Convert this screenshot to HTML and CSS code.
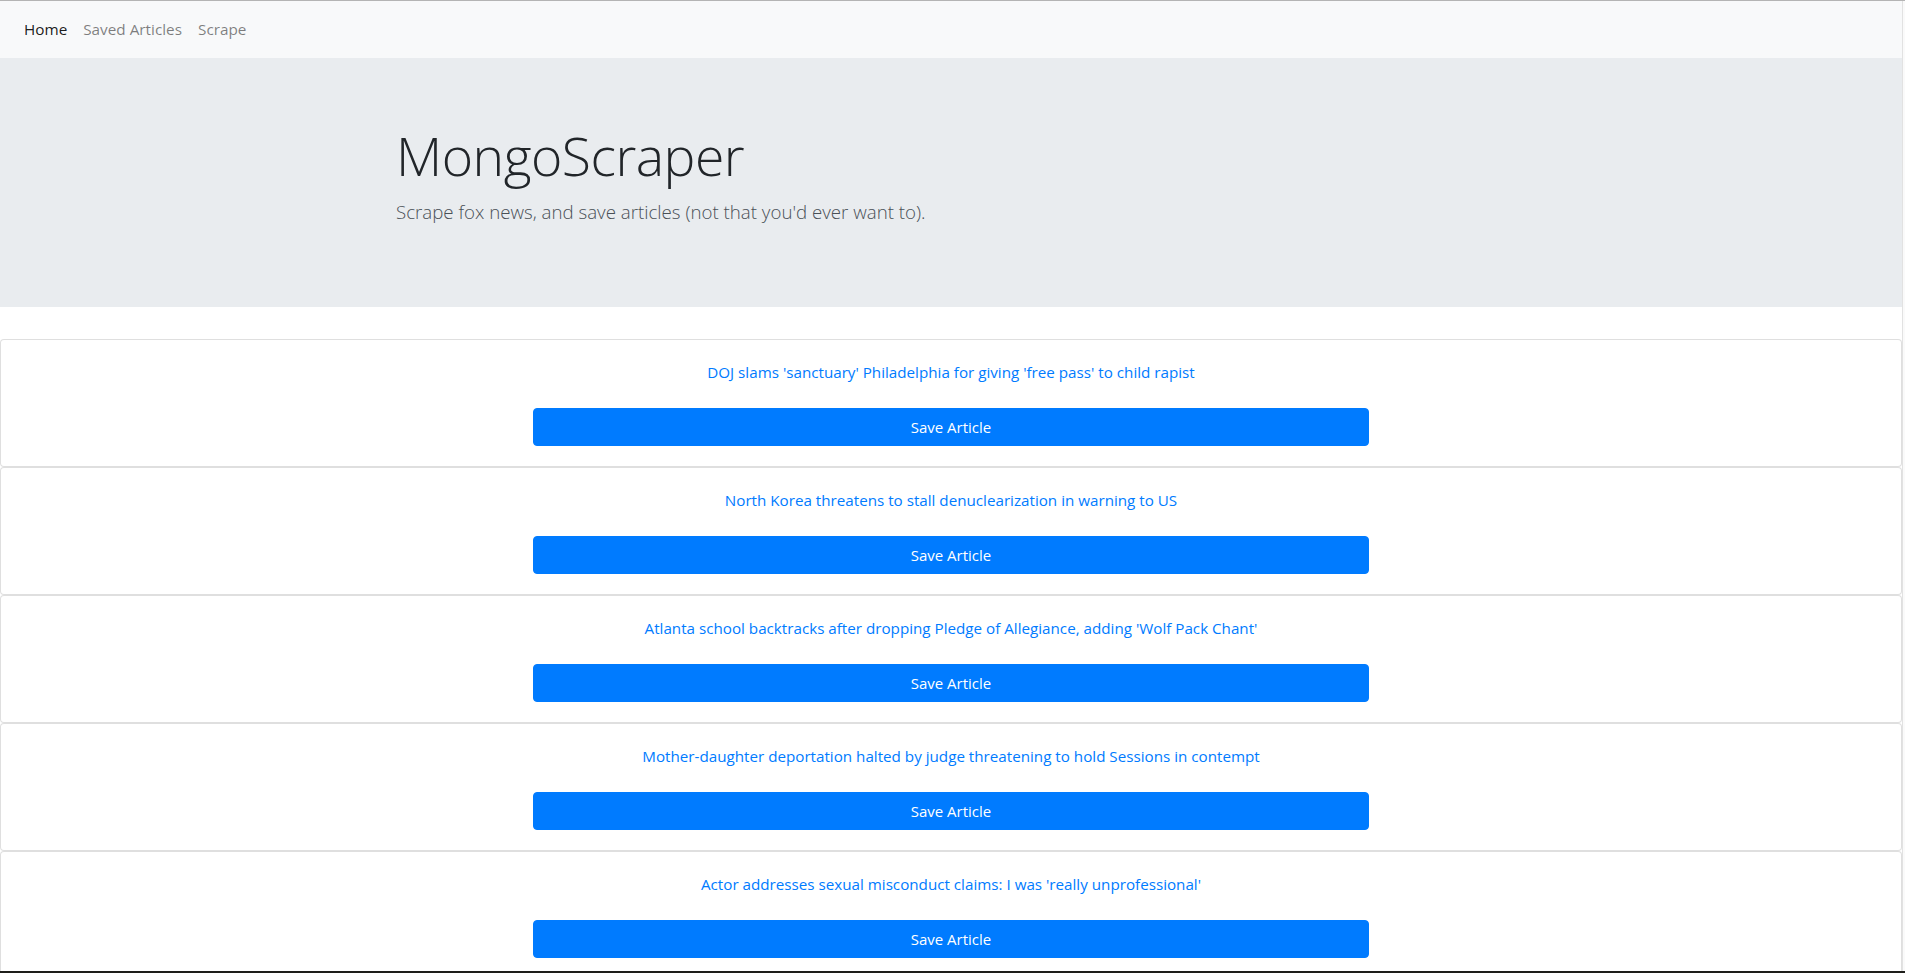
FILE: index.html
```html
<!DOCTYPE html>
<html lang="en">
<head>
<meta charset="utf-8">
<title>MongoScraper</title>
<link rel="stylesheet" href="styles.css">
</head>
<body>
<div class="page">
  <nav class="navbar">
    <a class="nav-link active" href="#">Home</a>
    <a class="nav-link" href="#">Saved Articles</a>
    <a class="nav-link" href="#">Scrape</a>
  </nav>
  <header class="jumbotron">
    <div class="container">
      <h1 class="display">MongoScraper</h1>
      <p class="lead">Scrape fox news, and save articles (not that you'd ever want to).</p>
    </div>
  </header>
  <main class="articles">
    <div class="card">
      <div class="card-body">
        <a class="article-link" href="#">DOJ slams 'sanctuary' Philadelphia for giving 'free pass' to child rapist</a>
        <button class="btn">Save Article</button>
      </div>
    </div>
    <div class="card">
      <div class="card-body">
        <a class="article-link" href="#">North Korea threatens to stall denuclearization in warning to US</a>
        <button class="btn">Save Article</button>
      </div>
    </div>
    <div class="card">
      <div class="card-body">
        <a class="article-link" href="#">Atlanta school backtracks after dropping Pledge of Allegiance, adding 'Wolf Pack Chant'</a>
        <button class="btn">Save Article</button>
      </div>
    </div>
    <div class="card">
      <div class="card-body">
        <a class="article-link" href="#">Mother-daughter deportation halted by judge threatening to hold Sessions in contempt</a>
        <button class="btn">Save Article</button>
      </div>
    </div>
    <div class="card">
      <div class="card-body">
        <a class="article-link" href="#">Actor addresses sexual misconduct claims: I was 'really unprofessional'</a>
        <button class="btn">Save Article</button>
      </div>
    </div>
  </main>
</div>
<div class="taskbar-edge"></div>
</body>
</html>
```

FILE: styles.css
```css
* { box-sizing: border-box; }

html {
  background: #fafafa;
}

body {
  margin: 0;
  border-top: 1px solid #b4b4b4;
  font-family: "Open Sans", "Noto Sans", sans-serif;
  font-size: 16px;
  line-height: 1.5;
  color: #212529;
}

.page {
  width: calc(100% - 2px);
  background: #fff;
  border-right: 1px solid #e2e2e2;
  min-height: 972px;
}

.navbar {
  display: flex;
  align-items: center;
  height: 57px;
  padding: 8px 16px;
  background: #f8f9fa;
}

.nav-link {
  padding: 8px;
  color: rgba(0, 0, 0, 0.5);
  text-decoration: none;
  font-size: 15.3px;
}

.nav-link.active {
  color: rgba(0, 0, 0, 0.9);
}

.jumbotron {
  background: #e9ecef;
  padding: 64px 0;
  margin-bottom: 32px;
}

.container {
  width: 1140px;
  margin: 0 auto;
  padding: 0 15px;
}

.display {
  margin: 0 0 8px;
  font-size: 53.5px;
  font-weight: 300;
  line-height: 67px;
  letter-spacing: -0.5px;
}

.lead {
  margin: 0 0 16px;
  font-size: 18.7px;
  font-weight: 300;
  line-height: 30px;
  color: #495057;
}

.card {
  border: 1px solid rgba(0, 0, 0, 0.125);
  border-radius: 4px;
  background: #fff;
}

.card-body {
  display: flex;
  flex-direction: column;
  align-items: center;
  padding: 20px;
  text-align: center;
}

.article-link {
  color: #007bff;
  text-decoration: none;
  font-size: 15.2px;
  line-height: 24px;
  margin-bottom: 24px;
}

.btn {
  width: 836px;
  height: 38px;
  border: 1px solid #007bff;
  border-radius: 4px;
  background: #007bff;
  color: #fff;
  font-family: inherit;
  font-size: 15px;
  line-height: 24px;
  cursor: pointer;
}

.taskbar-edge {
  position: fixed;
  left: 0;
  right: 0;
  bottom: 0;
  height: 2px;
  background: #1e1e1a;
}
```
